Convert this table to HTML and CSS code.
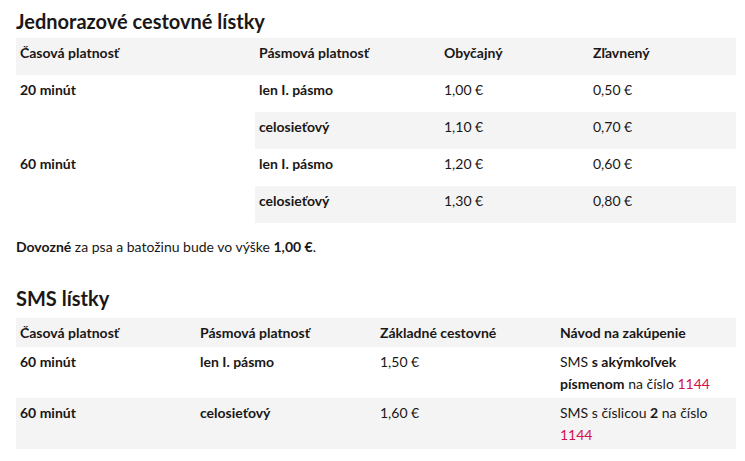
FILE: index.html
```html
<!DOCTYPE html>
<html lang="sk">
<head>
<meta charset="utf-8">
<title>Cestovné lístky</title>
<link rel="stylesheet" href="styles.css">
</head>
<body>
<main class="page">
  <h2 class="title title-first">Jednorazové cestovné lístky</h2>
  <table class="fares">
    <colgroup>
      <col class="c1"><col class="c2"><col class="c3"><col class="c4">
    </colgroup>
    <thead>
      <tr class="shade"><th>Časová platnosť</th><th>Pásmová platnosť</th><th>Obyčajný</th><th>Zľavnený</th></tr>
    </thead>
    <tbody>
      <tr><th rowspan="2" class="span">20 minút</th><th>len I. pásmo</th><td>1,00 €</td><td>0,50 €</td></tr>
      <tr class="shade"><th>celosieťový</th><td>1,10 €</td><td>0,70 €</td></tr>
      <tr><th rowspan="2" class="span">60 minút</th><th>len I. pásmo</th><td>1,20 €</td><td>0,60 €</td></tr>
      <tr class="shade"><th>celosieťový</th><td>1,30 €</td><td>0,80 €</td></tr>
    </tbody>
  </table>
  <p class="note"><strong>Dovozné</strong> za psa a batožinu bude vo výške <strong>1,00 €</strong>.</p>
  <h2 class="title title-second">SMS lístky</h2>
  <table class="sms">
    <thead>
      <tr class="shade"><th>Časová platnosť</th><th>Pásmová platnosť</th><th>Základné cestovné</th><th>Návod na zakúpenie</th></tr>
    </thead>
    <tbody>
      <tr><th>60 minút</th><th>len I. pásmo</th><td>1,50 €</td><td>SMS <strong>s akýmkoľvek</strong> <strong>písmenom</strong> na číslo <span class="num">1144</span></td></tr>
      <tr class="shade"><th>60 minút</th><th>celosieťový</th><td>1,60 €</td><td>SMS s číslicou <strong>2</strong> na číslo <span class="num">1144</span></td></tr>
    </tbody>
  </table>
</main>
</body>
</html>
```

FILE: styles.css
```css
* { box-sizing: border-box; }
html, body { margin: 0; padding: 0; background: #fff; }
body {
  font-family: Lato, "Noto Sans", sans-serif;
  font-size: 14px;
  line-height: 22px;
  color: #1a1716;
}
.page { padding: 8px 0 0 16px; width: 736px; }
.title {
  margin: 0;
  font-size: 20px;
  line-height: 26px;
  font-weight: 700;
}
.title-first { margin-bottom: 4px; }
.title-second { margin: 27px 0 7px; }
table {
  width: 720px;
  border-collapse: collapse;
  table-layout: fixed;
}
th, td { text-align: left; vertical-align: top; }
th { font-weight: 700; }
td { font-weight: 400; }
.fares th, .fares td { padding: 4px 4px 11px; }
.fares .c1 { width: 239px; }
.fares .c2 { width: 185px; }
.fares .c3 { width: 149px; }
.fares .c4 { width: 147px; }
.sms th, .sms td { padding: 4px 4px 3px; width: 180px; }
.shade th, .shade td { background: #f4f4f4; }
th.span { background: #fff; }
.note { margin: 13px 0 0; }
.num { color: #d4104f; }
strong { font-weight: 700; }
```
